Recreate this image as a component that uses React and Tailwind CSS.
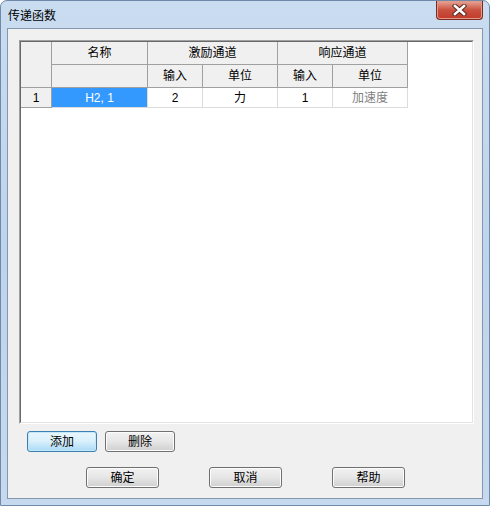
import React from 'react';

const font = { fontFamily: '"Liberation Sans", "Noto Sans CJK SC", sans-serif' };

const Button = ({ label, primary, w }) => (
  <button
    className={`h-[21px] ${w} rounded-[3px] border text-[12px] leading-none text-black ${
      primary
        ? 'border-[#3c7fb1] bg-gradient-to-b from-[#eaf6fd] via-[#d9f0fc] to-[#a7d9f5] shadow-[inset_0_0_0_1px_#c5e7fa]'
        : 'border-[#707070] bg-gradient-to-b from-[#f2f2f2] via-[#e6e6e6] to-[#cfcfcf] shadow-[inset_0_0_0_1px_#fcfcfc]'
    }`}
  >
    {label}
  </button>
);

const Head = ({ children, className = '' }) => (
  <div
    className={`flex items-center justify-center border-r border-b border-[#a0a0a0] bg-[#f0f0f0] text-[12px] text-black ${className}`}
  >
    {children}
  </div>
);

const Cell = ({ children, className = '' }) => (
  <div
    className={`flex items-center justify-center border-r border-b border-[#dcdcdc] text-[12px] ${className}`}
  >
    {children}
  </div>
);

export default function App() {
  return (
    <div
      className="flex h-[506px] w-[490px] flex-col overflow-hidden rounded-t-[7px] border border-[#6f8aa8] bg-gradient-to-b from-[#c9dcf0] via-[#bed4ec] to-[#c6d9ee]"
      style={font}
    >
      {/* title bar */}
      <div className="flex h-[27px] items-start justify-between">
        <div className="pl-[7px] pt-[8px] text-[12px] leading-[14px] text-black">传递函数</div>
        <div className="mr-[6px] flex h-[19px] w-[47px] items-center justify-center rounded-b-[4px] border border-t-0 border-[#7b2b22] bg-gradient-to-b from-[#e7a597] via-[#c9503e] to-[#c23a2a] shadow-[inset_0_0_0_1px_#e49a8b]">
          <svg width="15" height="12" viewBox="0 0 15 12">
            <path d="M3 2 L12 10 M12 2 L3 10" stroke="#5a2a22" strokeWidth="4.5" strokeLinecap="square" />
            <path d="M3 2 L12 10 M12 2 L3 10" stroke="#ffffff" strokeWidth="2.6" strokeLinecap="square" />
          </svg>
        </div>
      </div>

      {/* client */}
      <div className="flex-1 px-[6px] pb-[6px]">
        <div className="flex h-full flex-col border border-[#8497ae] bg-[#f0f0f0] pl-[11px] pt-[11px]">
          <div className="h-[384px] w-[455px] border-l border-t border-r border-b border-l-[#a0a0a0] border-t-[#a0a0a0] border-r-white border-b-white">
            <div className="h-full w-full border-l border-t border-r border-b border-l-[#696969] border-t-[#696969] border-r-[#e3e3e3] border-b-[#e3e3e3] bg-white">
              <div className="grid grid-cols-[31px_96px_55px_75px_55px_75px] grid-rows-[23px_23px_20px]">
                <Head className="row-span-2" />
                <Head>名称</Head>
                <Head className="col-span-2">激励通道</Head>
                <Head className="col-span-2">响应通道</Head>
                <Head />
                <Head>输入</Head>
                <Head>单位</Head>
                <Head>输入</Head>
                <Head>单位</Head>
                <Head>1</Head>
                <Cell className="bg-[#3399ff] text-white">H2, 1</Cell>
                <Cell className="text-black">2</Cell>
                <Cell className="text-black">力</Cell>
                <Cell className="text-black">1</Cell>
                <Cell className="text-[#808080]">加速度</Cell>
              </div>
            </div>
          </div>

          <div className="mt-[7px] flex gap-[8px] pl-[8px]">
            <Button label="添加" primary w="w-[70px]" />
            <Button label="删除" w="w-[70px]" />
          </div>

          <div className="mt-[15px] flex gap-[50px] pl-[67px]">
            <Button label="确定" w="w-[73px]" />
            <Button label="取消" w="w-[73px]" />
            <Button label="帮助" w="w-[73px]" />
          </div>
        </div>
      </div>
    </div>
  );
}
